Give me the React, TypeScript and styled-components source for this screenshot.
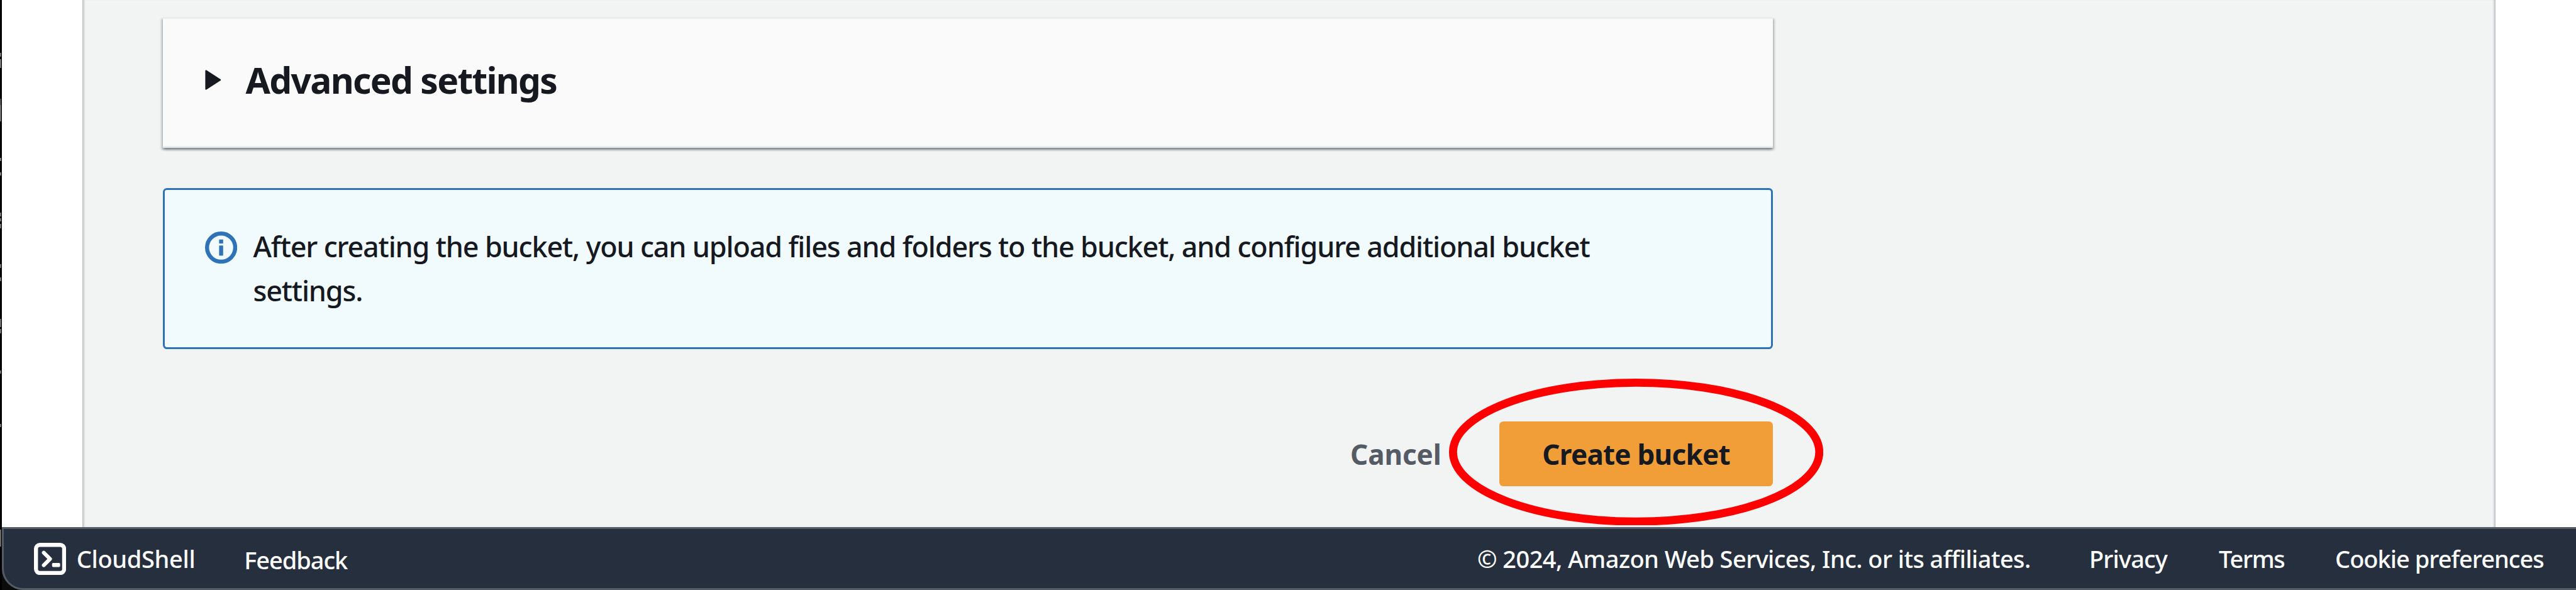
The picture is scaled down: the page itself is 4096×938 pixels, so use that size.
import React from "react";
import styled, { createGlobalStyle } from "styled-components";

const GlobalStyle = createGlobalStyle`
  *, *::before, *::after { box-sizing: border-box; }
  html, body { margin: 0; padding: 0; background: #fff; }
  body { overflow: hidden; font-family: "Noto Sans", "Open Sans", sans-serif; color: #16191f; }
`;

const Window = styled.div`
  display: grid;
  grid-template-columns: 3.2px 1fr;
  width: 4096px;
  height: 938px;
  overflow: hidden;
  background: #0b0b0b;
`;

/* Sliver of the terminal window that sits behind the browser. */
const specks: [number, number, string][] = [
  [84, 90, "#8a8a86"],
  [94, 108, "#8f8f8b"],
  [157, 167, "#5c5c59"],
  [167, 193, "#858581"],
  [251, 256, "#9a9a96"],
  [274, 279, "#9a9a96"],
  [338, 344, "#8a8a86"],
  [347, 352, "#8a8a86"],
  [356, 363, "#8a8a86"],
  [420, 426, "#8a8a86"],
  [441, 447, "#8a8a86"],
  [507, 520, "#85857f"],
  [523, 530, "#8a8a86"],
  [589, 594, "#8a8a86"],
  [674, 679, "#8a8a86"],
  [842, 869, "#7d7d79"],
];

const Backdrop = styled.div`
  height: 938px;
  background: linear-gradient(
      ${specks.map(([a, b, c]) => `transparent ${a}px, ${c} ${a}px, ${c} ${b}px, transparent ${b}px`).join(", ")}
    )
    0 0 / 1.6px 938px no-repeat, #000;
`;

const Browser = styled.div`
  display: flex;
  flex-direction: column;
  height: 938px;
`;

const Page = styled.main`
  display: flex;
  justify-content: flex-start;
  height: 838.4px;
  padding-left: 128px;
  background: #fff;
`;

const Content = styled.section`
  display: flex;
  flex-direction: column;
  align-items: flex-start;
  padding: 27.2px 0 0 128px;
  flex: none;
  width: 3836.8px;
  background: #f2f3f3;
  box-shadow: inset 1.6px 0 0 #bcc1c3, inset -1.6px 0 0 #bcc1c3, inset 4px 0 1px #dde1e1,
    inset -4px 0 1px #dde1e1;
`;

const Panel = styled.section`
  display: flex;
  align-items: flex-start;
  width: 2560px;
  height: 208px;
  padding: 61px 64px 0;
  border: solid #eaeded;
  border-width: 3.2px 0;
  background: #fafafa;
  box-shadow: 0 3.2px 3.2px 0 rgba(0, 28, 36, 0.3), 3.2px 3.2px 3.2px 0 rgba(0, 28, 36, 0.15),
    -3.2px 3.2px 3.2px 0 rgba(0, 28, 36, 0.15);
`;

const Caret = styled.svg`
  width: 32px;
  height: 32px;
  margin: 19.5px 32.2px 0 3.2px;
  flex: none;
`;

const Heading = styled.h2`
  margin: 0;
  font-size: 57px;
  font-weight: 700;
  line-height: 72px;
  letter-spacing: -1.75px;
  white-space: nowrap;
`;

const Alert = styled.div`
  display: flex;
  align-items: flex-start;
  width: 2560px;
  height: 256px;
  margin-top: 64px;
  padding: 54.5px 64px 0;
  border: 3.2px solid #2e73b8;
  border-radius: 6.4px;
  background: #f1fafd;
`;

const InfoIcon = styled.svg`
  width: 51.2px;
  height: 51.2px;
  margin: 11.3px 25.2px 0 0;
  flex: none;
`;

const AlertText = styled.p`
  margin: 0;
  width: 2200px;
  font-size: 45px;
  font-weight: 500;
  line-height: 70.4px;
  letter-spacing: -1.21px;
`;

const Actions = styled.div`
  display: grid;
  grid-template-columns: 237px 435.2px;
  justify-content: end;
  align-items: center;
  width: 2560px;
  height: 102.4px;
  margin-top: 115.2px;
`;

const Button = styled.button<{ $primary?: boolean }>`
  height: 102.4px;
  padding: 0;
  border: 0;
  border-radius: 6.4px;
  background: ${(p) => (p.$primary ? "#f19e39" : "transparent")};
  color: ${(p) => (p.$primary ? "#16191f" : "#545b64")};
  text-align: ${(p) => (p.$primary ? "center" : "left")};
  font: 700 44px/64px "Noto Sans", "Open Sans", sans-serif;
  letter-spacing: ${(p) => (p.$primary ? "-0.75px" : "-0.1px")};
  width: 100%;
`;

const Highlighted = styled.div`
  position: relative;
  height: 102.4px;
`;

const Ring = styled.svg`
  position: absolute;
  left: -80px;
  top: -68.8px;
  width: 595.2px;
  height: 233.6px;
  pointer-events: none;
`;

const Footer = styled.footer`
  display: flex;
  justify-content: space-between;
  align-items: center;
  height: 99.6px;
  padding-left: 48px;
  border: solid #545b64;
  border-width: 3.2px 0 3.2px 3.2px;
  border-bottom-left-radius: 34px;
  background: #262f3e;
`;

const ShellLinks = styled.nav`
  display: grid;
  grid-template-columns: 67.6px 266.4px auto;
  align-items: center;
`;

const LegalLinks = styled.nav`
  display: grid;
  grid-template-columns: 973px 206px 185px 383px;
  align-items: center;
`;

const FooterText = styled.span<{ $track: number; $drop?: number }>`
  padding-top: ${(p) => p.$drop ?? 0}px;
  color: #fff;
  font-size: 38px;
  font-weight: 500;
  line-height: 52px;
  letter-spacing: ${(p) => p.$track}px;
  white-space: nowrap;
`;

const ShellIcon = styled.svg`
  width: 51.2px;
  height: 51.2px;
`;

export default function App() {
  return (
    <>
      <GlobalStyle />
      <Window>
        <Backdrop />
        <Browser>
          <Page>
            <Content>
              <Panel>
                <Caret viewBox="0 0 40 40">
                  <path d="M2 2 L30 20 L2 38 Z" fill="#16191f" stroke="#16191f" strokeWidth="3" strokeLinejoin="round" />
                </Caret>
                <Heading>Advanced settings</Heading>
              </Panel>
              <Alert>
                <InfoIcon viewBox="0 0 64 64" fill="#2e73b8">
                  <circle cx="32" cy="32" r="28" fill="none" stroke="#2e73b8" strokeWidth="8" />
                  <rect x="28" y="16" width="8" height="8" />
                  <rect x="28" y="28" width="8" height="20" />
                </InfoIcon>
                <AlertText>
                  After creating the bucket, you can upload files and folders to the bucket, and configure additional
                  bucket settings.
                </AlertText>
              </Alert>
              <Actions>
                <Button>Cancel</Button>
                <Highlighted>
                  <Button $primary>Create bucket</Button>
                  <Ring viewBox="0 0 744 292">
                    <ellipse cx="372" cy="146" rx="364" ry="138" fill="none" stroke="#ff0000" strokeWidth="16" />
                  </Ring>
                </Highlighted>
              </Actions>
            </Content>
          </Page>
          <Footer>
            <ShellLinks>
              <ShellIcon viewBox="0 0 64 64" fill="none" stroke="#fff">
                <rect x="4" y="4" width="56" height="56" rx="8" strokeWidth="8" />
                <path d="M19.5 19.5 L32 32 L19.5 44.5" strokeWidth="7.5" strokeLinecap="round" strokeLinejoin="round" />
                <rect x="36" y="40" width="16" height="8" rx="2" fill="#fff" stroke="none" />
              </ShellIcon>
              <FooterText $track={-0.35}>CloudShell</FooterText>
              <FooterText $track={-1.05} $drop={3}>Feedback</FooterText>
            </ShellLinks>
            <LegalLinks>
              <FooterText $track={-0.58}>© 2024, Amazon Web Services, Inc. or its affiliates.</FooterText>
              <FooterText $track={-0.85}>Privacy</FooterText>
              <FooterText $track={-1.3}>Terms</FooterText>
              <FooterText $track={-1}>Cookie preferences</FooterText>
            </LegalLinks>
          </Footer>
        </Browser>
      </Window>
    </>
  );
}
